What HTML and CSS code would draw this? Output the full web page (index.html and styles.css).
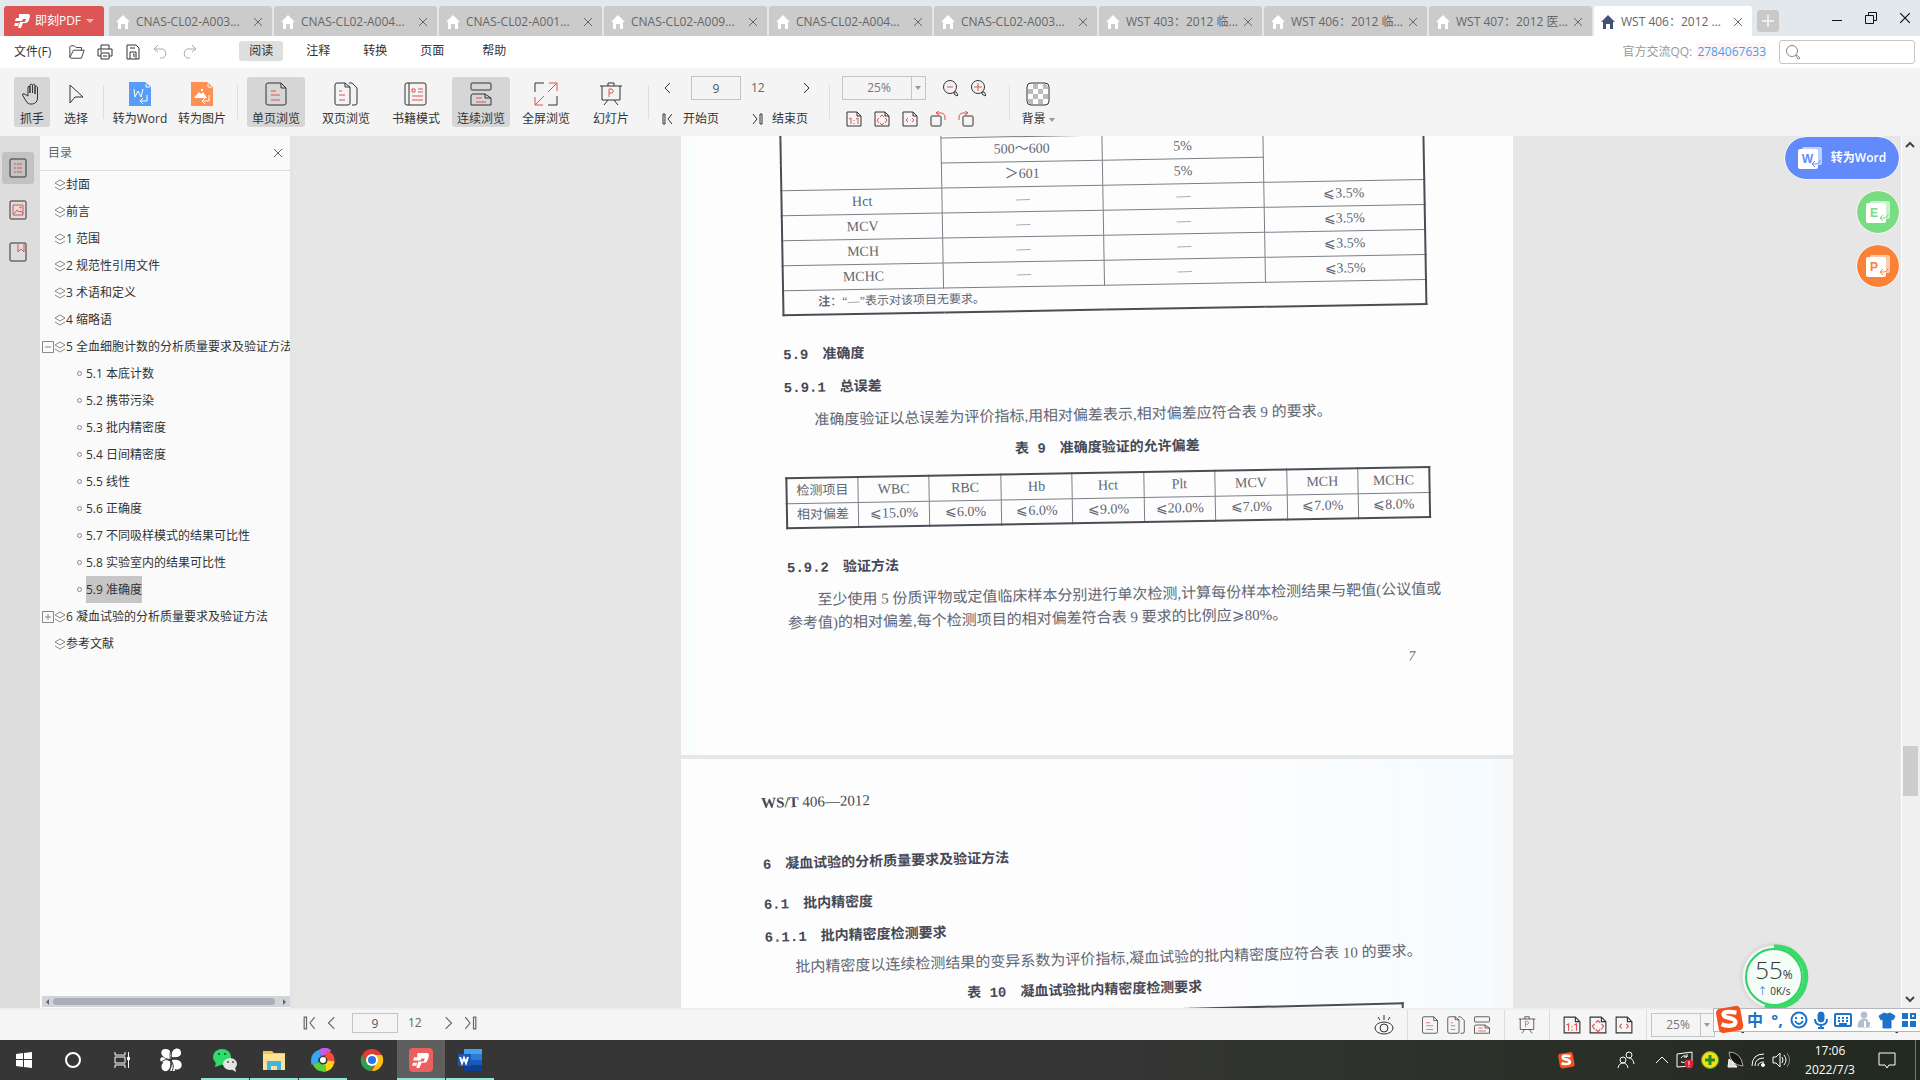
FILE: index.html
```html
<!DOCTYPE html>
<html lang="zh-CN">
<head>
    <meta charset="UTF-8">
    <meta name="viewport" content="width=device-width, initial-scale=1.0">
    <title>即刻PDF</title>
    <link rel="stylesheet" href="styles.css">
</head>
<body>
    <svg class="sprite" aria-hidden="true">
        <symbol id="home" viewBox="0 0 14 14"><path fill="currentColor" d="M7 0l7 7h-2v7H9V9H5v5H2V7H0z"/></symbol>
        <symbol id="close" viewBox="0 0 10 10"><path d="M1 1l8 8M9 1l-8 8"/></symbol>
        <symbol id="brand" viewBox="0 0 16 16"><path fill="currentColor" fill-rule="evenodd" d="M5 1h9q2 0 2 2l-1 4q-1 3-3 3H9l-2 5H4l2-6h5l1-3H9L8 8H1l1-3h3zM1 10h4l-1 3H0z"/></symbol>
        <symbol id="open" viewBox="0 0 18 16"><path d="M1 14V2l1-1h4l2 2h6v3M1 14l4-8h12l-3 9H2z"/></symbol>
        <symbol id="print" viewBox="0 0 16 16"><path d="M4 5V1h8v4M4 12H1V5h14v7h-3M4 9h8v6H4zM3 7h2M6 12h4"/></symbol>
        <symbol id="save" viewBox="0 0 16 16"><path d="M2 1h9l3 3v11H2zM5 15V8h6v7M5 4h5M8 10h1v3"/></symbol>
        <symbol id="undo" viewBox="0 0 16 16"><path d="M5 1L1 5l4 3M1 5h9a5 5 0 0 1 0 9H7"/></symbol>
        <symbol id="redo" viewBox="0 0 16 16"><path d="M11 1l4 4-4 3M15 5H6a5 5 0 0 0 0 9h3"/></symbol>
        <symbol id="search" viewBox="0 0 16 16"><circle cx="7" cy="7" r="5.5"/><path d="M11 11l2 1 2 2-2 1-2-3z"/></symbol>
        <symbol id="hand" viewBox="0 0 24 24"><path d="M8 14V5q1-2 2 0v6V3q1-2 2.5 0v8V3q1.500-2 2.500 0v9V5q1.500-2 2.500 0v11q0 5-5 6h-3q-3-1-4-4l-3-5q0-2 2-1z"/></symbol>
        <symbol id="cursor" viewBox="0 0 24 24"><path d="M6 3v18l5-6h8z"/></symbol>
        <symbol id="toword" viewBox="0 0 24 24"><path fill="#569df8" stroke="none" d="M1 0h16l6 5v19H1z"/><path stroke="#fff" d="M6 7l1 8 3-6 3 6 2-8M19 13v6h-6M15 16l-3 3 3 3M18 2v3h4"/></symbol>
        <symbol id="toimage" viewBox="0 0 24 24"><path fill="#fd9055" stroke="none" d="M1 0h16l6 5v19H1z"/><path fill="#fff" stroke="none" d="M4 16l5-6 2 2 2-2 4 6zM11 7h2v2h-2z"/><path stroke="#fff" d="M19 13v6h-6M15 16l-3 3 3 3M18 2v3h4"/></symbol>
        <symbol id="single" viewBox="0 0 24 24"><path d="M2 3q0-2 2-2h13l5 5v15q0 2-2 2H4q-2 0-2-2zM17 1v5h5"/><path class="red" d="M7 9h5M7 13h9M7 18h9"/></symbol>
        <symbol id="double" viewBox="0 0 24 24"><path d="M1 3q0-2 2-2h8l5 4v16q0 2-2 2H3q-2 0-2-2zM11 1v4h5M15 1h3l5 5v15q0 2-2 2h-3"/><path class="red" d="M5 9h3M5 13h6M5 18h6"/></symbol>
        <symbol id="book" viewBox="0 0 24 24"><rect x="1" y="1" width="21" height="22" rx="2"/><path d="M5 1v22"/><path class="red" d="M8 7h3v3H8zM14 7h5M14 10h5M8 14h11M8 18h11"/></symbol>
        <symbol id="continuous" viewBox="0 0 24 24"><rect x="2" y="1" width="20" height="7" rx="1"/><path d="M2 14q0-2 2-2h12l6 4v7H2zM16 12v4h6"/><path class="red" d="M7 16h6M7 20h10"/></symbol>
        <symbol id="full" viewBox="0 0 24 24"><path d="M1 10V1h9M23 14v9h-9"/><path class="red" d="M14 10l9-9M15 1h8v8M10 14l-9 9M1 15v8h8"/></symbol>
        <symbol id="slides" viewBox="0 0 24 24"><path d="M1 4h22M9 4V1h6v3M3 4v14h18V4M9 18l-4 5M15 18l4 5"/><path class="red" d="M10 15V7h3q3 2 0 4h-3"/></symbol>
        <symbol id="prev" viewBox="0 0 12 12"><path d="M8 1L3 6l5 5"/></symbol>
        <symbol id="next" viewBox="0 0 12 12"><path d="M4 1l5 5-5 5"/></symbol>
        <symbol id="first" viewBox="0 0 12 12"><path d="M10 1L6 6l4 5M1 1h2v10H1z"/></symbol>
        <symbol id="last" viewBox="0 0 12 12"><path d="M2 1l4 5-4 5M9 1h2v10H9z"/></symbol>
        <symbol id="minus" viewBox="0 0 18 18"><circle cx="8" cy="8" r="6.5"/><path d="M12 13h2l2 3-1 1-3-2z"/><path class="red" d="M5 8h6"/></symbol>
        <symbol id="plus" viewBox="0 0 18 18"><circle cx="8" cy="8" r="6.5"/><path d="M12 13h2l2 3-1 1-3-2z"/><path class="red" d="M4 8h8M8 4v8"/></symbol>
        <symbol id="actual" viewBox="0 0 16 16"><path d="M1 1h10l4 4v10H1zM11 1v4h4"/><path class="red" d="M3 8l2-1v6M10 8l2-1v6M8 9v1M8 12v1"/></symbol>
        <symbol id="fitpage" viewBox="0 0 16 16"><path d="M1 1h10l4 4v10H1zM11 1v4h4"/><path class="red" d="M6 6l2-2 2 2M5 7L3 9l2 3M11 7l2 2-2 3M6 12l2 2 2-2"/></symbol>
        <symbol id="fitwidth" viewBox="0 0 16 16"><path d="M1 1h10l4 4v10H1zM11 1v4h4"/><path class="red" d="M6 7L4 9l2 2M10 7l2 2-2 2"/></symbol>
        <symbol id="rotleft" viewBox="0 0 16 16"><rect x="1" y="5" width="10" height="10" rx="1"/><path class="red" d="M9 0L6 2l3 2M6 2h5q4 0 4 5v2"/></symbol>
        <symbol id="rotright" viewBox="0 0 16 16"><rect x="5" y="5" width="10" height="10" rx="1"/><path class="red" d="M7 0l3 2-3 2M10 2H5Q1 2 1 7v2"/></symbol>
        <symbol id="checker" viewBox="0 0 24 24"><rect x="1" y="1" width="22" height="22" rx="4" fill="#fff"/><path fill="#bbb" stroke="none" d="M7 2h5v5H7zM17 2h3l2 3v2h-5zM2 7h5v5H2zM12 7h5v5h-5zM7 12h5v5H7zM17 12h5v5h-5zM2 17h5v5H4l-2-2zM12 17h5v5h-5z"/></symbol>
        <symbol id="outline" viewBox="0 0 18 20"><rect x="1" y="1" width="16" height="18" rx="1"/><path class="red" d="M5 6h2M8 6h5M5 10h2M8 10h5M5 14h2M8 14h5"/></symbol>
        <symbol id="thumbs" viewBox="0 0 18 20"><rect x="1" y="1" width="16" height="18" rx="1"/><path class="red" d="M4 5h10v10H4zM5 14l3-4 2 2 2-1 2 3M11 7h1v1h-1z"/></symbol>
        <symbol id="bookmark" viewBox="0 0 18 20"><rect x="1" y="1" width="16" height="18" rx="1"/><path class="red" d="M9 2v8l3-3 3 3V2"/></symbol>
        <symbol id="layers" viewBox="0 0 12 12"><path d="M6 1l5 3-5 3-5-3zM1 8l5 3 5-3"/></symbol>
        <symbol id="eye" viewBox="0 0 20 20"><ellipse cx="10" cy="13" rx="9" ry="6"/><circle cx="10" cy="13" r="4"/><path d="M4 2l2 3M10 0v5M16 2l-2 3"/></symbol>
        <symbol id="convert" viewBox="0 0 24 22"><rect x="4" y="0" width="20" height="18" rx="2" fill="#fff" fill-opacity=".6" stroke="none"/><rect x="0" y="2" width="20" height="20" rx="2" fill="#fff" stroke="none"/><path d="M22 13q0 4-5 4h-2M17 14l-3 3 3 3"/></symbol>
        <symbol id="sogou" viewBox="0 0 28 28"><rect x="3" y="3" width="23" height="23" rx="4" fill="#f4511e" stroke="none" transform="rotate(-10 14 14)"/><path stroke="#fff" stroke-width="4" d="M21 8q-13-2-12 2c0 4 11 2 11 7 0 4-8 4-13 2"/></symbol>
    </svg>

    <header class="titlebar">
        <button class="brand"><svg class="icon-16"><use href="#brand"/></svg>即刻PDF<span class="caret caret--light"></span></button>
        <nav class="tabs">
            <div class="tab"><svg class="icon-14"><use href="#home"/></svg><a href="#">CNAS-CL02-A003...</a><button aria-label="关闭"><svg class="icon-10"><use href="#close"/></svg></button></div>
            <div class="tab"><svg class="icon-14"><use href="#home"/></svg><a href="#">CNAS-CL02-A004...</a><button aria-label="关闭"><svg class="icon-10"><use href="#close"/></svg></button></div>
            <div class="tab"><svg class="icon-14"><use href="#home"/></svg><a href="#">CNAS-CL02-A001...</a><button aria-label="关闭"><svg class="icon-10"><use href="#close"/></svg></button></div>
            <div class="tab"><svg class="icon-14"><use href="#home"/></svg><a href="#">CNAS-CL02-A009...</a><button aria-label="关闭"><svg class="icon-10"><use href="#close"/></svg></button></div>
            <div class="tab"><svg class="icon-14"><use href="#home"/></svg><a href="#">CNAS-CL02-A004...</a><button aria-label="关闭"><svg class="icon-10"><use href="#close"/></svg></button></div>
            <div class="tab"><svg class="icon-14"><use href="#home"/></svg><a href="#">CNAS-CL02-A003...</a><button aria-label="关闭"><svg class="icon-10"><use href="#close"/></svg></button></div>
            <div class="tab"><svg class="icon-14"><use href="#home"/></svg><a href="#">WST 403：2012 临...</a><button aria-label="关闭"><svg class="icon-10"><use href="#close"/></svg></button></div>
            <div class="tab"><svg class="icon-14"><use href="#home"/></svg><a href="#">WST 406：2012 临...</a><button aria-label="关闭"><svg class="icon-10"><use href="#close"/></svg></button></div>
            <div class="tab"><svg class="icon-14"><use href="#home"/></svg><a href="#">WST 407：2012 医...</a><button aria-label="关闭"><svg class="icon-10"><use href="#close"/></svg></button></div>
            <div class="tab tab--active"><svg class="icon-14"><use href="#home"/></svg><a href="#">WST 406：2012 ...</a><button aria-label="关闭"><svg class="icon-10"><use href="#close"/></svg></button></div>
        </nav>
        <button class="new-tab" aria-label="新建"><svg class="icon-14" viewBox="0 0 14 14"><path stroke-width="2" d="M7 1v12M1 7h12"/></svg></button>
        <div class="window-buttons">
            <button aria-label="最小化"><svg class="icon-12" viewBox="0 0 12 12"><path d="M1 8.500h10"/></svg></button>
            <button aria-label="还原"><svg class="icon-12" viewBox="0 0 12 12"><path d="M.5 3.500h8v8h-8zM3.500 3V.5h8v8H9"/></svg></button>
            <button aria-label="关闭"><svg class="icon-12"><use href="#close"/></svg></button>
        </div>
    </header>

    <div class="menubar">
        <button class="file-menu">文件(F)</button>
        <div class="quick">
            <button aria-label="打开"><svg class="icon-16"><use href="#open"/></svg></button>
            <button aria-label="打印"><svg class="icon-16"><use href="#print"/></svg></button>
            <button aria-label="保存"><svg class="icon-16"><use href="#save"/></svg></button>
            <button class="muted" aria-label="撤销"><svg class="icon-16"><use href="#undo"/></svg></button>
            <button class="muted" aria-label="重做"><svg class="icon-16"><use href="#redo"/></svg></button>
        </div>
        <nav class="menu">
            <button class="selected">阅读</button>
            <button>注释</button>
            <button>转换</button>
            <button>页面</button>
            <button>帮助</button>
        </nav>
        <p class="contact">官方交流QQ: <a href="#">2784067633</a></p>
        <label class="search"><svg class="icon-16"><use href="#search"/></svg><input type="search" aria-label="搜索"></label>
    </div>

    <div class="toolbar">
        <div class="group group--mode">
            <button class="tool tool--small selected"><svg class="icon-24"><use href="#hand"/></svg>抓手</button>
            <button class="tool tool--small"><svg class="icon-24"><use href="#cursor"/></svg>选择</button>
        </div>
        <div class="group group--convert">
            <button class="tool"><svg class="icon-24"><use href="#toword"/></svg>转为Word</button>
            <button class="tool"><svg class="icon-24"><use href="#toimage"/></svg>转为图片</button>
        </div>
        <div class="group group--view">
            <div class="layouts">
                <button class="tool selected"><svg class="icon-24"><use href="#single"/></svg>单页浏览</button>
                <button class="tool"><svg class="icon-24"><use href="#double"/></svg>双页浏览</button>
                <button class="tool"><svg class="icon-24"><use href="#book"/></svg>书籍模式</button>
            </div>
            <button class="tool selected"><svg class="icon-24"><use href="#continuous"/></svg>连续浏览</button>
            <button class="tool"><svg class="icon-24"><use href="#full"/></svg>全屏浏览</button>
            <button class="tool"><svg class="icon-24"><use href="#slides"/></svg>幻灯片</button>
        </div>
        <div class="group group--pages">
            <div class="row row--pager">
                <button aria-label="上一页"><svg class="icon-12"><use href="#prev"/></svg></button>
                <input class="page-input" type="text" value="9" aria-label="页码">
                <span class="page-total">12</span>
                <button aria-label="下一页"><svg class="icon-12"><use href="#next"/></svg></button>
            </div>
            <div class="row row--ends">
                <button><svg class="icon-12"><use href="#first"/></svg>开始页</button>
                <button><svg class="icon-12"><use href="#last"/></svg>结束页</button>
            </div>
        </div>
        <div class="group group--zoom">
            <div class="row row--zoom">
                <div class="select"><select aria-label="缩放"><option>25%</option></select><span class="caret"></span></div>
                <button aria-label="缩小"><svg class="icon-18"><use href="#minus"/></svg></button>
                <button aria-label="放大"><svg class="icon-18"><use href="#plus"/></svg></button>
            </div>
            <div class="row row--fit">
                <button aria-label="实际大小"><svg class="icon-16"><use href="#actual"/></svg></button>
                <button aria-label="适合页面"><svg class="icon-16"><use href="#fitpage"/></svg></button>
                <button aria-label="适合宽度"><svg class="icon-16"><use href="#fitwidth"/></svg></button>
                <button aria-label="向左旋转"><svg class="icon-16"><use href="#rotleft"/></svg></button>
                <button aria-label="向右旋转"><svg class="icon-16"><use href="#rotright"/></svg></button>
            </div>
        </div>
        <div class="group group--background">
            <button class="tool"><svg class="icon-24"><use href="#checker"/></svg><span>背景 <span class="caret"></span></span></button>
        </div>
    </div>

    <main class="workspace">
        <aside class="rail">
            <button class="selected" aria-label="目录"><svg class="icon-20"><use href="#outline"/></svg></button>
            <button aria-label="缩略图"><svg class="icon-20"><use href="#thumbs"/></svg></button>
            <button aria-label="书签"><svg class="icon-20"><use href="#bookmark"/></svg></button>
        </aside>

        <section class="panel">
            <header class="panel__head"><h2>目录</h2><button aria-label="关闭"><svg class="icon-10"><use href="#close"/></svg></button></header>
            <ul class="tree">
                <li><svg class="icon-12"><use href="#layers"/></svg><a href="#">封面</a></li>
                <li><svg class="icon-12"><use href="#layers"/></svg><a href="#">前言</a></li>
                <li><svg class="icon-12"><use href="#layers"/></svg><a href="#">1 范围</a></li>
                <li><svg class="icon-12"><use href="#layers"/></svg><a href="#">2 规范性引用文件</a></li>
                <li><svg class="icon-12"><use href="#layers"/></svg><a href="#">3 术语和定义</a></li>
                <li><svg class="icon-12"><use href="#layers"/></svg><a href="#">4 缩略语</a></li>
                <li class="branch"><button aria-label="折叠"><svg class="icon-12" viewBox="0 0 12 12"><path d="M.5.5h11v11H.5zM3 6h6"/></svg></button><svg class="icon-12"><use href="#layers"/></svg><a href="#">5 全血细胞计数的分析质量要求及验证方法</a></li>
                <li class="leaf"><a href="#">5.1 本底计数</a></li>
                <li class="leaf"><a href="#">5.2 携带污染</a></li>
                <li class="leaf"><a href="#">5.3 批内精密度</a></li>
                <li class="leaf"><a href="#">5.4 日间精密度</a></li>
                <li class="leaf"><a href="#">5.5 线性</a></li>
                <li class="leaf"><a href="#">5.6 正确度</a></li>
                <li class="leaf"><a href="#">5.7 不同吸样模式的结果可比性</a></li>
                <li class="leaf"><a href="#">5.8 实验室内的结果可比性</a></li>
                <li class="leaf"><a href="#" class="current">5.9 准确度</a></li>
                <li class="branch"><button aria-label="展开"><svg class="icon-12" viewBox="0 0 12 12"><path d="M.5.5h11v11H.5zM3 6h6M6 3v6"/></svg></button><svg class="icon-12"><use href="#layers"/></svg><a href="#">6 凝血试验的分析质量要求及验证方法</a></li>
                <li><svg class="icon-12"><use href="#layers"/></svg><a href="#">参考文献</a></li>
            </ul>
            <div class="hscroll"><span class="arrow arrow--left"></span><span class="hscroll__thumb"></span><span class="arrow arrow--right"></span></div>
        </section>

        <section class="viewer">
            <article class="page page--seven">
                <div class="scan">
                    <table class="grid">
                        <tr><td rowspan="3"></td><td></td><td></td><td rowspan="3"></td></tr>
                        <tr><td>500～600</td><td>5%</td></tr>
                        <tr><td>＞601</td><td>5%</td></tr>
                        <tr><td>Hct</td><td>—</td><td>—</td><td>⩽3.5%</td></tr>
                        <tr><td>MCV</td><td>—</td><td>—</td><td>⩽3.5%</td></tr>
                        <tr><td>MCH</td><td>—</td><td>—</td><td>⩽3.5%</td></tr>
                        <tr><td>MCHC</td><td>—</td><td>—</td><td>⩽3.5%</td></tr>
                        <tr><td colspan="4" class="note"><b>注</b>：“—”表示对该项目无要求。</td></tr>
                    </table>
                    <h3 class="section">5.9　准确度</h3>
                    <h4>5.9.1　总误差</h4>
                    <p>准确度验证以总误差为评价指标,用相对偏差表示,相对偏差应符合表 9 的要求。</p>
                    <table class="grid grid--nine">
                        <caption>表 9　准确度验证的允许偏差</caption>
                        <tr><th>检测项目</th><td>WBC</td><td>RBC</td><td>Hb</td><td>Hct</td><td>Plt</td><td>MCV</td><td>MCH</td><td>MCHC</td></tr>
                        <tr><th>相对偏差</th><td>⩽15.0%</td><td>⩽6.0%</td><td>⩽6.0%</td><td>⩽9.0%</td><td>⩽20.0%</td><td>⩽7.0%</td><td>⩽7.0%</td><td>⩽8.0%</td></tr>
                    </table>
                    <h4 class="section">5.9.2　验证方法</h4>
                    <p>至少使用 5 份质评物或定值临床样本分别进行单次检测,计算每份样本检测结果与靶值(公议值或<br>参考值)的相对偏差,每个检测项目的相对偏差符合表 9 要求的比例应⩾80%。</p>
                    <div class="folio">7</div>
                </div>
            </article>
            <article class="page page--eight">
                <div class="scan">
                    <div class="running-head"><b>WS/T</b> 406—2012</div>
                    <h2>6　凝血试验的分析质量要求及验证方法</h2>
                    <h3>6.1　批内精密度</h3>
                    <h4>6.1.1　批内精密度检测要求</h4>
                    <p>批内精密度以连续检测结果的变异系数为评价指标,凝血试验的批内精密度应符合表 10 的要求。</p>
                    <table class="grid">
                        <caption>表 10　凝血试验批内精密度检测要求</caption>
                        <tr><td></td><td></td><td></td></tr>
                    </table>
                </div>
            </article>
            <div class="floats">
                <button class="float float--word"><span class="float__icon"><svg viewBox="0 0 24 22"><use href="#convert"/></svg><b>W</b></span>转为Word</button>
                <button class="float float--excel"><span class="float__icon"><svg viewBox="0 0 24 22"><use href="#convert"/></svg><b>E</b></span></button>
                <button class="float float--ppt"><span class="float__icon"><svg viewBox="0 0 24 22"><use href="#convert"/></svg><b>P</b></span></button>
            </div>
        </section>

        <div class="vscroll">
            <svg class="icon-10" viewBox="0 0 10 10"><path d="M1 7l4-4 4 4"/></svg>
            <span class="vscroll__thumb"></span>
            <svg class="icon-10" viewBox="0 0 10 10"><path d="M1 3l4 4 4-4"/></svg>
        </div>
    </main>

    <footer class="statusbar">
        <div class="status-pager">
            <button aria-label="首页"><svg class="icon-14"><use href="#first"/></svg></button>
            <button aria-label="上一页"><svg class="icon-14"><use href="#prev"/></svg></button>
            <input class="page-input" type="text" value="9" aria-label="页码">
            <span class="page-total">12</span>
            <button aria-label="下一页"><svg class="icon-14"><use href="#next"/></svg></button>
            <button aria-label="末页"><svg class="icon-14"><use href="#last"/></svg></button>
        </div>
        <div class="status-tools">
            <div class="cell"><button aria-label="护眼"><svg class="icon-20"><use href="#eye"/></svg></button></div>
            <div class="cell">
                <button aria-label="单页"><svg class="icon-18"><use href="#single"/></svg></button>
                <button aria-label="双页"><svg class="icon-18"><use href="#double"/></svg></button>
                <button aria-label="连续"><svg class="icon-18"><use href="#continuous"/></svg></button>
            </div>
            <div class="cell"><button aria-label="幻灯片"><svg class="icon-18"><use href="#slides"/></svg></button></div>
            <div class="cell">
                <button aria-label="实际大小"><svg class="icon-18"><use href="#actual"/></svg></button>
                <button aria-label="适合页面"><svg class="icon-18"><use href="#fitpage"/></svg></button>
                <button aria-label="适合宽度"><svg class="icon-18"><use href="#fitwidth"/></svg></button>
            </div>
            <div class="select"><select aria-label="缩放比例"><option>25%</option></select><span class="caret"></span></div>
            <div class="slider-ends"><svg class="icon-18"><use href="#minus"/></svg><svg class="icon-18"><use href="#plus"/></svg></div>
        </div>
    </footer>

    <div class="meter">
        <svg viewBox="0 0 72 72">
            <circle cx="36" cy="36" r="35" fill="#dedede" stroke="none"/>
            <circle cx="36" cy="36" r="32" fill="#f4f4f4" stroke="#d8d8d8"/>
            <circle cx="36" cy="36" r="28" fill="#f5fdf7" stroke="#2cd267" stroke-width="2"/>
            <path stroke="#38da68" stroke-width="5" d="M36 6a30 30 0 1 1-9 58"/>
        </svg>
        <div class="meter__text"><div><span class="meter__value">55</span>%</div><small><span class="up">↑</span> 0K/s</small></div>
    </div>

    <div class="ime">
        <svg class="ime__logo"><use href="#sogou"/></svg>
        <button>中</button>
        <button>°,</button>
        <button aria-label="表情"><svg class="icon-18" viewBox="0 0 18 18"><circle cx="9" cy="9" r="7.5" stroke-width="2"/><path stroke-width="2" d="M6 6v2M12 6v2M5 10q4 6 8 0"/></svg></button>
        <button aria-label="语音"><svg class="icon-18" viewBox="0 0 18 18"><rect x="6" y="1" width="6" height="10" rx="3" fill="currentColor"/><path stroke-width="2" d="M3 8q0 6 6 6t6-6M9 14v3M6 17h6"/></svg></button>
        <button aria-label="键盘"><svg class="icon-18" viewBox="0 0 18 18"><rect x="1" y="3" width="16" height="12" rx="1" stroke-width="2"/><path stroke-width="2" d="M4 7h2M8 7h2M12 7h2M4 10h2M8 10h2M12 10h2M5 13h8"/></svg></button>
        <button class="muted" aria-label="账号"><svg class="icon-18" viewBox="0 0 18 18"><circle cx="8" cy="4" r="3" fill="currentColor"/><path fill="currentColor" d="M2 16q0-8 6-8t7 8z"/><path stroke="#fff" stroke-width="2" d="M9 10v6M12 10h4l-2 6"/></svg></button>
        <button aria-label="皮肤"><svg class="icon-18" viewBox="0 0 18 18"><path fill="currentColor" d="M6 2q3 2 6 0l5 3-2 4-2-1v9H5V8L3 9 1 5z"/></svg></button>
        <button aria-label="工具"><svg class="icon-18" viewBox="0 0 18 18"><path fill="currentColor" stroke="none" d="M2 2h6v6H2zM2 10h6v6H2zM10 10h6v6h-6z"/><path stroke-width="2" d="M11 3h4v4h-4z"/></svg></button>
    </div>

    <footer class="taskbar">
        <nav class="apps">
            <button aria-label="开始"><svg class="icon-18" viewBox="0 0 18 18"><path fill="#fff" stroke="none" d="M1 3l7-1v6H1zM9 2l8-1v7H9zM1 9h7v7l-7-1zM9 9h8v8l-8-1z"/></svg></button>
            <button aria-label="搜索"><svg class="icon-18" viewBox="0 0 18 18"><circle cx="9" cy="9" r="7" stroke-width="2"/></svg></button>
            <button aria-label="任务视图"><svg class="icon-18" viewBox="0 0 18 18"><path d="M2 1v3h10V1M2 17v-3h10v3M2 6h10v6H2zM15.500 1v16"/><path stroke-width="3" d="M15.500 6v3"/></svg></button>
            <button aria-label="花瓣"><svg class="icon-24" viewBox="0 0 24 24"><path fill="#fff" stroke="none" d="M12 11C0 11 0 0 7 1q6 0 5 10zM13 9c-2-9 8-11 9-5 1 5-5 6-9 5zM13 12c12-2 11 8 7 9-5 2-8-2-7-9zM11 13c2 11-6 12-8 8-2-5 2-8 8-8zM10 12C2 18-1 11 3 9zM14 14l2 9-5 0z"/><path stroke="#363636" d="M12 1q-2 8 0 11 4-4 10-1M12 12q-6-2-10 2M12 12q4 6 1 11"/></svg></button>
            <button class="open open--first" aria-label="微信"><svg class="icon-24" viewBox="0 0 24 24"><ellipse cx="9" cy="9" rx="9" ry="8" fill="#2fdc6b" stroke="none"/><path fill="#2fdc6b" stroke="none" d="M3 14l-1 5 6-2z"/><ellipse cx="17" cy="16" rx="7" ry="6" fill="#e4e4e4" stroke="none"/><path fill="#e4e4e4" stroke="none" d="M18 21l5 3-1-5z"/><path stroke="#1a6d3a" stroke-width="2" d="M6 5v2M12 5v2"/><path stroke="#777" stroke-width="2" d="M15 13v2M20 13v2"/></svg></button>
            <button class="open" aria-label="文件资源管理器"><svg class="icon-24" viewBox="0 0 24 24"><path fill="#f5c548" stroke="none" d="M1 3h9l2 2h11v5H1z"/><path fill="#fde293" stroke="none" d="M1 6h22v16H1z"/><path fill="#3fb4e8" stroke="none" d="M5 13h14v9h-4v-4H9v4H5z"/></svg></button>
            <button class="open" aria-label="浏览器"><svg class="icon-24" viewBox="0 0 24 24"><g fill="none" stroke-width="7"><path stroke="#c15cf0" d="M9 6q4-5 9-1"/><path stroke="#fb4a3c" d="M15 6q6 2 5 9"/><path stroke="#fdd50f" d="M20 13q-1 7-8 7"/><path stroke="#5ad13a" d="M15 20q-8 1-10-5"/><path stroke="#36a7f2" d="M4 16Q2 8 9 5"/></g><circle cx="12" cy="12" r="3" fill="#fff" stroke="none"/></svg></button>
            <button aria-label="Chrome"><svg class="icon-24" viewBox="0 0 24 24"><g stroke="none"><circle cx="12" cy="12" r="11" fill="#e33b2e"/><path fill="#fbc116" d="M12 7h10a11 11 0 0 1-10 16l5-9z"/><path fill="#2ba24c" d="M2 7l5 8 7 2-3 6A11 11 0 0 1 2 7z"/><circle cx="12" cy="12" r="6" fill="#fff"/><circle cx="12" cy="12" r="4" fill="#2a74e8"/></g></svg></button>
            <button class="open open--active" aria-label="即刻PDF"><svg class="icon-24" viewBox="0 0 24 24"><rect width="24" height="24" rx="4" fill="#ec5f5f" stroke="none"/><use href="#brand" x="3" y="4" width="17" height="17" stroke="none"/></svg></button>
            <button class="open" aria-label="Word"><svg class="icon-24" viewBox="0 0 24 24"><g stroke="none"><path fill="#41a5ee" d="M6 1h18v6H6z"/><path fill="#2b7cd3" d="M6 6h18v6H6z"/><path fill="#185abd" d="M6 12h18v6H6z"/><path fill="#103f91" d="M6 17h18v6H6z"/><path fill="#1a56b4" d="M0 6h13v12H0z"/></g><path stroke="#fff" stroke-width="2" d="M2 9l2 6 2-5 2 5 2-6"/></svg></button>
        </nav>
        <div class="tray">
            <svg class="icon-18 tray__sogou"><use href="#sogou"/></svg>
            <svg class="icon-18 tray__people" viewBox="0 0 18 18"><circle cx="12" cy="4" r="3"/><circle cx="6" cy="9" r="3"/><path d="M1 17q1-5 5-5t5 5M12 7q4 0 5 6"/></svg>
            <svg class="icon-14" viewBox="0 0 14 14"><path d="M1 10l6-6 6 6"/></svg>
            <svg class="icon-18" viewBox="0 0 18 18"><path d="M1 3l15-2v14L1 16zM5 7q3-4 6-1M11 3v3H8M11 9q-2 4-6 2"/><circle cx="13" cy="13" r="4.5" fill="#e11e2f" stroke="none"/><path d="M13 10v4M13 15v1"/></svg>
            <svg class="icon-18" viewBox="0 0 18 18"><circle cx="9" cy="9" r="8.5" fill="#f6dd16" stroke="#57a823"/><path stroke="#218a2c" stroke-width="3" d="M9 4v10M4 9h10"/></svg>
            <svg class="icon-18" viewBox="0 0 18 18"><path fill="#151515" stroke="#aaa" d="M3 1q12 0 14 14Q4 14 3 1z"/><path fill="#ddd" d="M3 8l4 3 4 5H2z"/></svg>
            <svg class="icon-14" viewBox="0 0 14 14"><path d="M1 13Q1 1 13 1M4 13q0-8 9-8M7 13q0-4 6-4"/><circle cx="12" cy="12" r="1.5" fill="#fff"/></svg>
            <svg class="icon-18" viewBox="0 0 18 18"><path d="M1 6h3l4-4v14l-4-4H1zM10 6q2 3 0 6M12 4q4 5 0 10"/><path stroke="#888" d="M15 2q5 7 0 14"/></svg>
            <time>17:06<br>2022/7/3</time>
            <svg class="icon-18" viewBox="0 0 18 18"><path d="M1 2h16v12h-6l-2 3-2-3H1z"/></svg>
        </div>
    </footer>
</body>
</html>
```
FILE: styles.css
```css
*,
*::before,
*::after {
    box-sizing: border-box;
}

body {
    display: flex;
    flex-direction: column;
    height: 100vh;
    margin: 0;
    overflow: hidden;
    background-color: #e3e8ec;
    color: #333;
    font-family: "Open Sans", "Noto Sans CJK SC", sans-serif;
    font-size: 12px;
    line-height: 16px;
}

button,
input,
select {
    margin: 0;
    padding: 0;
    border: none;
    background: none;
    color: inherit;
    font: inherit;
}

a {
    color: inherit;
    text-decoration: none;
}

h2, h3, h4, p, ul {
    margin: 0;
    padding: 0;
    font-size: inherit;
}

svg {
    display: block;
    flex: none;
    fill: none;
    stroke: currentColor;
}

.sprite {
    position: absolute;
    width: 0;
    height: 0;
}

.red {
    stroke: #e05252;
}

.icon-10 { width: 10px; height: 10px; }
.icon-12 { width: 12px; height: 12px; }
.icon-14 { width: 14px; height: 14px; }
.icon-16 { width: 16px; height: 16px; }
.icon-18 { width: 18px; height: 18px; }
.icon-20 { width: 20px; height: 20px; }
.icon-24 { width: 24px; height: 24px; }

.caret {
    display: inline-block;
    border: 3px solid transparent;
    border-top: 4px solid #999;
    border-bottom: none;
    vertical-align: middle;
}

.caret--light {
    border-width: 4px 4px 0;
    border-top-color: #f3b5b5;
}

.muted {
    color: #aaa;
}

/* title bar */
.titlebar {
    display: flex;
    align-items: flex-end;
    flex: none;
    height: 36px;
    padding-left: 4px;
}

.brand {
    display: flex;
    align-items: center;
    justify-content: center;
    gap: 5px;
    width: 100px;
    height: 30px;
    margin-right: 5px;
    border-radius: 3px 3px 0 0;
    background-color: #de5555;
    color: #fff;
}

.brand svg {
    stroke: none;
}

.tabs {
    display: flex;
    gap: 2px;
}

.tab {
    display: flex;
    align-items: center;
    width: 163px;
    height: 30px;
    padding: 2px 9px 0 7px;
    border-radius: 3px 3px 0 0;
    background-color: #cbcbcb;
    color: #666;
}

.tab > svg {
    margin-right: 6px;
    color: #fff;
    stroke: none;
}

.tab a {
    flex: 1;
    white-space: nowrap;
}

.tab--active {
    width: 158px;
    background-color: #fff;
}

.tab--active > svg {
    color: #44527a;
}

.new-tab {
    display: grid;
    place-items: center;
    width: 22px;
    height: 22px;
    margin: 0 auto 4px 5px;
    border-radius: 3px;
    background-color: #c9c9c9;
    color: #eee;
}

.window-buttons {
    display: flex;
    gap: 22px;
    padding: 0 9px 12px 0;
    color: #111;
}

/* menu row */
.menubar {
    display: flex;
    align-items: center;
    flex: none;
    height: 32px;
    padding: 0 5px 0 14px;
    background-color: #fff;
}

.quick {
    display: flex;
    gap: 12px;
    margin: 0 42px 0 18px;
}

.menu {
    display: flex;
    gap: 13px;
    padding-bottom: 2px;
}

.menu button {
    width: 44px;
    height: 20px;
    border-radius: 3px;
}

.menu button:last-child {
    margin-left: 5px;
}

.menu .selected {
    background-color: #dedede;
}

.contact {
    margin-left: auto;
    color: #999;
}

.contact a {
    margin-left: 2px;
    background-color: #fdf5f5;
    color: #4b9de8;
}

.search {
    display: flex;
    align-items: center;
    width: 136px;
    height: 24px;
    margin-left: 13px;
    padding-left: 5px;
    border: 1px solid #c6c6c6;
    border-radius: 3px;
    color: #888;
}

.search input {
    width: 100px;
}

/* toolbar */
.toolbar {
    display: flex;
    align-items: center;
    flex: none;
    height: 68px;
    background-color: #f4f4f4;
}

.group {
    display: flex;
    align-items: center;
    position: relative;
}

/* divider between groups */
.group + .group::before {
    content: "";
    position: absolute;
    left: 0;
    top: 50%;
    width: 1px;
    height: 34px;
    margin-top: -17px;
    background-color: #dadde2;
}

.group--mode {
    gap: 8px;
    padding: 0 9px 0 14px;
}

.group--convert {
    gap: 4px;
    padding: 0 6px 0 8px;
}

.group--view {
    gap: 7px;
    padding: 0 8px 0 10px;
}

.layouts {
    display: flex;
    gap: 12px;
}

.tool {
    display: flex;
    flex-direction: column;
    align-items: center;
    gap: 5px;
    width: 58px;
    height: 50px;
    padding-top: 5px;
    border-radius: 3px;
    white-space: nowrap;
}

.tool--small {
    width: 36px;
}

.tool.selected {
    background-color: #d6d6d6;
}

.group--pages,
.group--zoom {
    flex-direction: column;
    align-items: flex-start;
    gap: 10px;
}

.group--pages {
    padding: 0 17px 0 14px;
}

.row {
    display: flex;
    align-items: center;
}

.row button {
    display: flex;
    align-items: center;
    gap: 9px;
}

.page-input {
    width: 50px;
    height: 24px;
    border: 1px solid #c3c6c9;
    color: #555;
    text-align: center;
}

.page-total {
    color: #666;
}

.row--pager {
    width: 150px;
}

.row--pager .page-input {
    margin: 0 10px 0 17px;
}

.row--pager button:last-child {
    margin-left: auto;
}

.row--ends {
    gap: 32px;
    height: 18px;
}

.group--zoom {
    padding: 0 21px 0 13px;
}

.row--zoom {
    gap: 10px;
}

.row--fit {
    gap: 12px;
    height: 18px;
    padding-left: 4px;
}

.select {
    position: relative;
    width: 84px;
    height: 24px;
    margin-right: 6px;
    border: 1px solid #c3c6c9;
    color: #777;
}

.select select {
    width: 100%;
    height: 100%;
    padding-right: 10px;
    appearance: none;
    text-align: center;
}

.select::after {
    content: "";
    position: absolute;
    top: 0;
    right: 13px;
    bottom: 0;
    width: 1px;
    background-color: #c3c6c9;
}

.select .caret {
    position: absolute;
    top: 9px;
    right: 4px;
}

/* main area */
.workspace {
    display: flex;
    flex: 1;
    min-height: 0;
}

.rail {
    display: flex;
    flex-direction: column;
    gap: 10px;
    width: 40px;
    padding: 16px 2px;
    background-color: #ddd;
}

.rail button {
    display: grid;
    place-items: center;
    width: 32px;
    height: 32px;
    border-radius: 3px;
}

.rail .selected {
    background-color: #c2c2c2;
}

.panel {
    display: flex;
    flex-direction: column;
    width: 250px;
    background-color: #fafafa;
}

.panel__head {
    display: flex;
    align-items: center;
    justify-content: space-between;
    height: 35px;
    padding: 0 7px 0 8px;
    border-bottom: 1px solid #dcdcdc;
    color: #666;
}

.panel__head h2 {
    font-weight: normal;
}

.tree {
    flex: 1;
    overflow: hidden;
    list-style: none;
}

.tree li {
    display: flex;
    align-items: center;
    height: 27px;
    padding-left: 14px;
    white-space: nowrap;
}

.tree svg {
    color: #888;
}

.tree a {
    line-height: 27px;
}

.tree .branch {
    padding-left: 2px;
}

.tree .leaf {
    gap: 4px;
    padding-left: 37px;
}

.leaf::before {
    content: "";
    width: 5px;
    height: 5px;
    border: 1px solid #888;
    border-radius: 50%;
}

.tree .current {
    background-color: #c6c6c6;
}

.hscroll {
    display: flex;
    align-items: center;
    justify-content: space-between;
    height: 11px;
    margin: 0 0 1px 2px;
    padding: 0 4px;
    background-color: #d2d4d9;
}

.hscroll__thumb {
    flex: 1;
    height: 7px;
    margin: 0 8px 0 4px;
    border-radius: 4px;
    background-color: #a9aeb9;
}

.arrow {
    border: 3px solid transparent;
}

.arrow--left {
    border-right-color: #666;
    border-left: none;
}

.arrow--right {
    border-left-color: #666;
    border-right: none;
}

/* document */
.viewer {
    position: relative;
    display: flex;
    flex-direction: column;
    align-items: center;
    gap: 4px;
    flex: 1;
    overflow: hidden;
    border-left: 3px solid #e2e4e8;
    background-color: #e6e6e6;
}

.page {
    flex: none;
    width: 832px;
    overflow: hidden;
    background-color: #fdfdfe;
    color: #626672;
    font-family: "Liberation Serif", "Noto Sans CJK SC", serif;
}

.page--seven {
    height: 619px;
    background-image: linear-gradient(to right, #f9fcfc 15px, transparent 17px);
}

.page--eight {
    height: 1180px;
    background-image: linear-gradient(to left, #f7f8f9 18px, #f6fbff 20px, transparent 320px);
}

/* the sheets were scanned slightly askew */
.scan {
    transform: rotate(-1deg);
    transform-origin: 0 0;
    padding-left: 98px;
}

.page--seven .scan {
    width: 743px;
    margin-top: -20px;
}

.page--eight .scan {
    width: 716px;
    padding: 36px 0 0 79px;
    transform: rotate(-1.5deg);
}

.page h2,
.page h3,
.page h4,
.page caption {
    color: #464955;
    font-family: "Liberation Mono", "Noto Sans CJK SC", monospace;
    font-size: 14px;
    font-weight: bold;
    line-height: 20px;
}

.page p {
    margin: 11px 0;
    font-size: 15px;
    line-height: 23px;
    text-indent: 30px;
    white-space: nowrap;
}

.grid {
    width: 100%;
    border: 2px solid #4a4d55;
    border-collapse: collapse;
    table-layout: fixed;
    font-size: 14px;
}

.grid td,
.grid th {
    height: 25px;
    padding: 0;
    border: 1px solid #7b7f87;
    font-weight: normal;
    line-height: 16px;
    text-align: center;
}

.grid caption {
    padding-bottom: 14px;
}

.grid .note {
    padding-left: 34px;
    font-size: 12px;
    text-align: left;
}

.grid--nine th {
    font-size: 13px;
}

.page .section {
    margin-top: 29px;
}

.page h3 + h4 {
    margin-top: 13px;
}

.folio {
    margin-top: 22px;
    padding-right: 18px;
    font-size: 14px;
    font-style: italic;
    line-height: 20px;
    text-align: right;
}

.running-head {
    color: #464955;
    font-size: 15px;
    line-height: 20px;
}

.page--eight h2 {
    margin-top: 42px;
}

.page--eight h3 {
    margin-top: 20px;
}

.page--eight p {
    margin: 9px 0;
}

.page--eight caption {
    padding-bottom: 10px;
}

/* convert shortcuts over the document */
.floats {
    position: absolute;
    top: 1px;
    right: 2px;
    display: flex;
    flex-direction: column;
    align-items: flex-end;
    gap: 12px;
}

.float {
    display: flex;
    align-items: center;
    justify-content: center;
    gap: 9px;
    width: 42px;
    height: 42px;
    border-radius: 21px;
    outline: 1px solid #f3f3f3;
    background-color: #77dd80;
    color: #77dd80;
    font-weight: 600;
}

.float--word {
    width: 114px;
    background-color: #638afb;
    color: #fff;
}

.float--word .float__icon {
    color: #638afb;
}

.float--ppt {
    background-color: #fb8137;
    color: #fb8137;
}

.float__icon {
    position: relative;
    width: 24px;
    height: 22px;
    font-family: "Liberation Sans", sans-serif;
}

.float__icon b {
    position: absolute;
    left: 4px;
    top: 4px;
}

.vscroll {
    display: flex;
    flex-direction: column;
    align-items: center;
    justify-content: space-between;
    width: 19px;
    padding: 4px 2px 4px 0;
    border-left: 1px solid #fff;
    background-color: #f0f0f0;
    color: #444;
    stroke-width: 2;
}

.vscroll__thumb {
    width: 15px;
    height: 50px;
    margin-top: 398px;
    background-color: #cdcdcd;
}

/* status bar */
.statusbar {
    display: flex;
    justify-content: space-between;
    flex: none;
    height: 32px;
    border-top: 2px solid #eee;
    background-color: #f5f5f5;
}

.status-pager {
    display: flex;
    align-items: center;
    gap: 8px;
    padding: 0 0 4px 303px;
    color: #666;
}

.status-pager .page-input {
    width: 46px;
    height: 20px;
    margin-left: 5px;
}

.status-pager .page-total {
    margin: 0 11px 0 2px;
}

.status-tools {
    display: flex;
    align-items: center;
}

.cell {
    display: flex;
    align-items: center;
    gap: 8px;
    height: 30px;
    padding: 0 13px;
    border-right: 1px solid #dadde2;
}

.status-tools .select {
    width: 64px;
    margin-left: 4px;
}

.slider-ends {
    display: flex;
    justify-content: space-between;
    width: 199px;
    padding: 0 20px 0 7px;
}

/* network meter */
.meter {
    position: absolute;
    right: 110px;
    bottom: 67px;
    width: 72px;
    height: 72px;
}

.meter__text {
    position: absolute;
    top: 17px;
    left: 0;
    right: 0;
    text-align: center;
}

.meter__value {
    font-size: 24px;
    font-weight: 300;
    line-height: 24px;
}

.meter small {
    font-size: 10px;
}

.up {
    color: #2a86f0;
}

/* input method bar */
.ime {
    position: absolute;
    right: 0;
    bottom: 48px;
    display: flex;
    align-items: center;
    gap: 4px;
    height: 24px;
    padding: 0 2px 0 32px;
    border: 1px solid #b5b5bf;
    border-right: none;
    background-color: #fff;
    color: #1d73c9;
    font-size: 16px;
    font-weight: bold;
}

.ime__logo {
    position: absolute;
    left: 0;
    top: -5px;
    width: 30px;
    height: 30px;
}

.ime button {
    width: 18px;
}

.ime .muted {
    color: #b3bdd0;
}

/* taskbar */
.taskbar {
    display: flex;
    justify-content: space-between;
    flex: none;
    height: 40px;
    background: linear-gradient(to right, #363636 55%, #2d312b 75%, #22291f);
    color: #fff;
}

.apps {
    display: flex;
    gap: 1px;
}

.apps button {
    display: grid;
    place-items: center;
    width: 48px;
}

.apps .open {
    border-top: 2px solid transparent;
    border-bottom: 2px solid #8de6d6;
}

.apps .open--first {
    margin-left: 5px;
}

.apps .open--active {
    background-color: #5e5e5e;
}

.tray {
    display: flex;
    align-items: center;
    gap: 7px;
    margin-right: 4px;
    padding-right: 19px;
    border-right: 1px solid #777;
}

.tray__sogou {
    margin-right: 35px;
}

.tray__people {
    margin-right: 13px;
}

.tray time {
    width: 66px;
    margin-right: 8px;
    line-height: 19px;
    text-align: center;
}
```
